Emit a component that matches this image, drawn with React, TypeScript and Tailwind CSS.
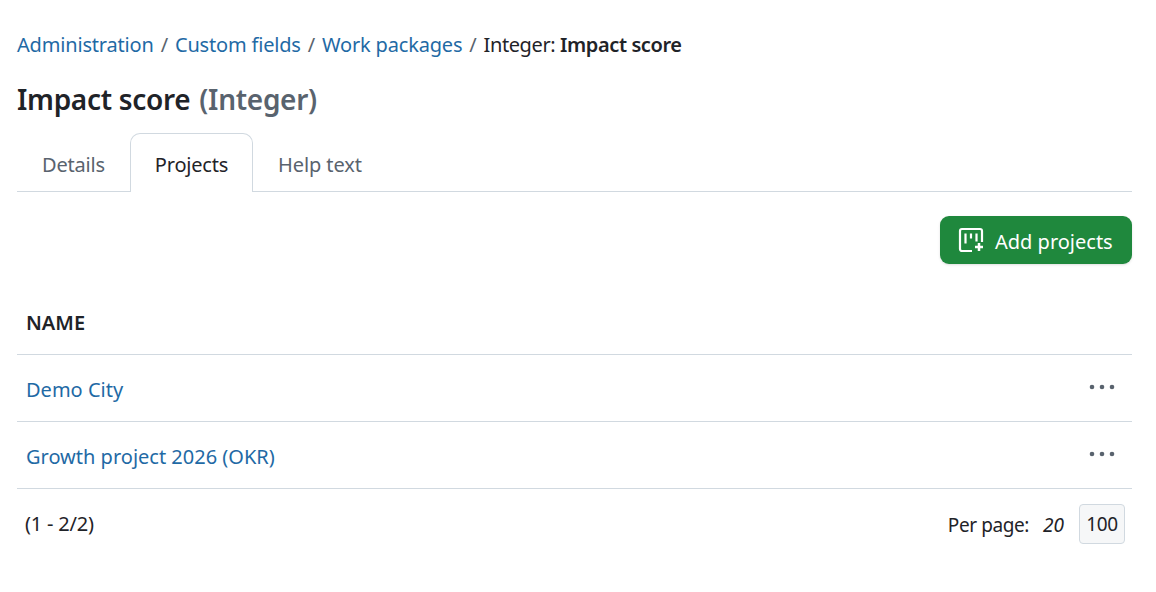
const rows = ['Demo City', 'Growth project 2026 (OKR)']

function ProjectAddIcon() {
  return (
    <svg width="26" height="26" viewBox="0 0 26 26" fill="none" stroke="currentColor" strokeWidth="2.200">
      <path d="M14 24H4a2 2 0 0 1-2-2V4a2 2 0 0 1 2-2h18a2 2 0 0 1 2 2v11" />
      <path d="M7.500 6.500v10M13 6.500v5M18.500 6.500v8" />
      <path d="M21 16v8M17 20h8" strokeWidth="2.500" />
    </svg>
  )
}

function Dots() {
  return (
    <svg width="26" height="6" viewBox="0 0 26 6" fill="#59636e" className="mr-[17px] -mt-[2px]">
      <circle cx="3" cy="3" r="2.300" />
      <circle cx="13" cy="3" r="2.300" />
      <circle cx="23" cy="3" r="2.300" />
    </svg>
  )
}

export default function App() {
  return (
    <div className="w-[1156px] h-[592px] bg-white pl-[17px] pr-[24px] pt-[30px] font-['Noto_Sans',sans-serif] text-[#1f2328] overflow-hidden">
      <nav className="flex items-center h-[30px] text-[20px] tracking-[-0.18px] whitespace-nowrap">
        <a className="text-[#1f6aa5]">Administration</a>
        <span className="mx-[7px] text-[#59636e]">/</span>
        <a className="text-[#1f6aa5]">Custom fields</a>
        <span className="mx-[7px] text-[#59636e]">/</span>
        <a className="text-[#1f6aa5]">Work packages</a>
        <span className="mx-[7px] text-[#59636e]">/</span>
        <span className="tracking-[-0.4px]">Integer: <b className="font-semibold">Impact score</b></span>
      </nav>

      <h1 className="mt-[21px] h-[36px] leading-[36px] text-[28px] font-semibold tracking-[-0.3px]">
        Impact score <span className="ml-[2px] text-[#59636e]">(Integer)</span>
      </h1>

      <div className="mt-[16px] flex h-[59px] border-b border-[#d1d9e0] text-[20px] tracking-[-0.2px]">
        <div className="w-[113px] pl-[25px] pt-[17px] text-[#59636e]">Details</div>
        <div className="w-[123px] h-[59px] pt-[16px] text-center bg-white border border-b-0 border-[#d1d9e0] rounded-t-[10px]">Projects</div>
        <div className="pl-[25px] pt-[17px] text-[#59636e] tracking-[-0.1px]">Help text</div>
      </div>

      <div className="mt-[24px] flex justify-end">
        <button className="flex items-center gap-[11px] h-[48px] w-[192px] pl-[18px] rounded-[9px] bg-[#1f883d] text-white text-[20px] shadow-sm">
          <ProjectAddIcon />
          <span className="pt-[4px]">Add projects</span>
        </button>
      </div>

      <div className="mt-[24px] h-[67px] border-b border-[#d1d9e0] pl-[9px] pt-[3px] flex items-center text-[20px] font-semibold">
        NAME
      </div>

      {rows.map(r => (
        <div key={r} className="h-[67px] border-b border-[#d1d9e0] pl-[9px] flex items-center justify-between text-[20px]">
          <a className="text-[#1f6aa5] pt-[4px]">{r}</a>
          <Dots />
        </div>
      ))}

      <div className="mt-[15px] flex items-center justify-between pl-[8px] pr-[7px]">
        <span className="text-[20px] tracking-[-0.2px]">(1 - 2/2)</span>
        <div className="flex items-center text-[19px]">
          <span className="tracking-[-0.4px] pt-[2px]">Per page:</span>
          <em className="ml-[14px] pt-[2px]">20</em>
          <span className="ml-[15px] flex h-[40px] w-[46px] items-center justify-center rounded-[4px] border border-[#d1d9e0] bg-[#f6f7f8] tracking-[-0.3px] pt-[1px]">100</span>
        </div>
      </div>
    </div>
  )
}
